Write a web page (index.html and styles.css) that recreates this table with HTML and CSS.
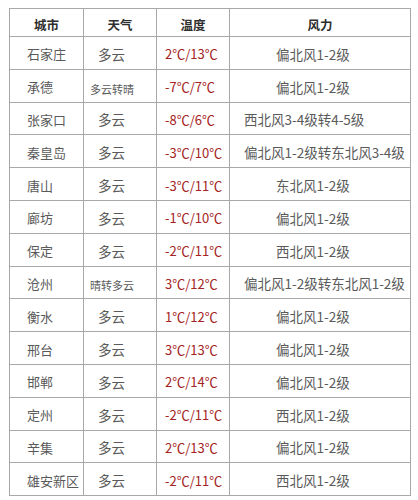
FILE: index.html
```html
<!DOCTYPE html>
<html lang="zh-CN">
<head>
<meta charset="utf-8">
<link rel="stylesheet" href="styles.css">
</head>
<body>
<table class="weather">
  <colgroup>
    <col class="c-city"><col class="c-wx"><col class="c-temp"><col class="c-wind">
  </colgroup>
  <thead>
    <tr><th>城市</th><th>天气</th><th>温度</th><th>风力</th></tr>
  </thead>
  <tbody>
    <tr><td class="city">石家庄</td><td class="wx">多云</td><td class="temp">2℃/13℃</td><td class="wind">偏北风1-2级</td></tr>
    <tr><td class="city">承德</td><td class="wx small">多云转晴</td><td class="temp">-7℃/7℃</td><td class="wind">偏北风1-2级</td></tr>
    <tr><td class="city">张家口</td><td class="wx">多云</td><td class="temp">-8℃/6℃</td><td class="wind long">西北风3-4级转4-5级</td></tr>
    <tr><td class="city">秦皇岛</td><td class="wx">多云</td><td class="temp">-3℃/10℃</td><td class="wind long">偏北风1-2级转东北风3-4级</td></tr>
    <tr><td class="city">唐山</td><td class="wx">多云</td><td class="temp">-3℃/11℃</td><td class="wind">东北风1-2级</td></tr>
    <tr><td class="city">廊坊</td><td class="wx">多云</td><td class="temp">-1℃/10℃</td><td class="wind">偏北风1-2级</td></tr>
    <tr><td class="city">保定</td><td class="wx">多云</td><td class="temp">-2℃/11℃</td><td class="wind">西北风1-2级</td></tr>
    <tr><td class="city">沧州</td><td class="wx small">晴转多云</td><td class="temp">3℃/12℃</td><td class="wind long">偏北风1-2级转东北风1-2级</td></tr>
    <tr><td class="city">衡水</td><td class="wx">多云</td><td class="temp">1℃/12℃</td><td class="wind">偏北风1-2级</td></tr>
    <tr><td class="city">邢台</td><td class="wx">多云</td><td class="temp">3℃/13℃</td><td class="wind">偏北风1-2级</td></tr>
    <tr><td class="city">邯郸</td><td class="wx">多云</td><td class="temp">2℃/14℃</td><td class="wind">偏北风1-2级</td></tr>
    <tr><td class="city">定州</td><td class="wx">多云</td><td class="temp">-2℃/11℃</td><td class="wind">西北风1-2级</td></tr>
    <tr><td class="city">辛集</td><td class="wx">多云</td><td class="temp">2℃/13℃</td><td class="wind">偏北风1-2级</td></tr>
    <tr><td class="city">雄安新区</td><td class="wx">多云</td><td class="temp">-2℃/11℃</td><td class="wind">西北风1-2级</td></tr>
  </tbody>
</table>
</body>
</html>
```
FILE: styles.css
```css
html, body {
  margin: 0;
  padding: 0;
  background: #ffffff;
}
body {
  padding: 8px 0 0 9px;
  font-family: "Noto Sans CJK SC", "Noto Sans", sans-serif;
}
.weather {
  border-collapse: collapse;
  table-layout: fixed;
  width: 401px;
  border: 1px solid #8c8c8c;
}
.c-city { width: 74px; }
.c-wx { width: 73px; }
.c-temp { width: 73px; }
.c-wind { width: 181px; }
.weather th,
.weather td {
  border: 1px solid #a8a8a8;
  padding: 0;
  white-space: nowrap;
  overflow: visible;
}
.weather th {
  height: 28px;
  font-size: 12.5px;
  font-weight: 700;
  color: #2e2e2e;
  text-align: center;
  padding-top: 4px;
  box-sizing: border-box;
}
.weather td {
  height: 32.8px;
  box-sizing: border-box;
  padding-top: 2px;
  font-size: 13.5px;
  color: #5a5a5a;
  vertical-align: middle;
}
.weather .city {
  padding-left: 17px;
  font-size: 13px;
  color: #5a5a5a;
}
.weather .wx {
  padding-left: 14px;
}
.weather .wx.small {
  font-size: 11px;
  padding-left: 6px;
  padding-top: 6px;
}
.weather .temp {
  padding-left: 8px;
  color: #a42323;
  font-size: 13px;
}
.weather .wind {
  padding-left: 46px;
}
.weather .wind.long {
  padding-left: 14px;
}
```
